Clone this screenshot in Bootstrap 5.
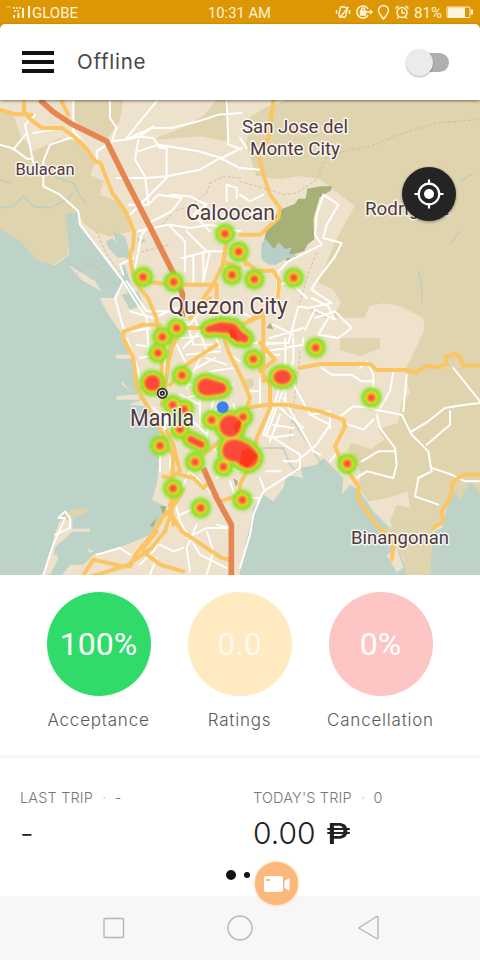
<!DOCTYPE html>
<html lang="en">
<head>
<meta charset="utf-8">
<meta name="viewport" content="width=device-width, initial-scale=1">
<title>Driver home</title>
<link href="https://cdn.jsdelivr.net/npm/bootstrap@5.3.0/dist/css/bootstrap.min.css" rel="stylesheet">
<style>
body{font-family:Inter,"Liberation Sans",sans-serif;background:#fff;color:#3c3c3c}
.screen{width:480px;height:960px;overflow:hidden}
.statusbar{height:24px;background:#de9704}
.statusbar svg{display:block}
.appbar{height:76px;padding:0 31px 0 22px;box-shadow:0 1px 3px rgba(0,0,0,.5);z-index:2;border-radius:5px 5px 0 0}
.cap{background:#de9704;z-index:2}
.brand{font-size:20.5px;letter-spacing:.75px;margin-left:23px;color:#484848;line-height:28px}
.burger i{display:block;width:32px;height:4px;background:#111;margin-bottom:5px}
.burger i:last-child{margin:0}
.toggle-track{width:36px;height:19px;border-radius:10px;background:#afafaf}
.toggle-thumb{width:27px;height:27px;border-radius:50%;background:#ebebeb;box-shadow:0 1px 2px rgba(0,0,0,.3);left:-7px;top:-4px}
.map-pane{height:475px}
.map-pane svg{display:block}
.maplabel{font-family:Roboto,sans-serif;fill:#523840;stroke:#fff;stroke-width:3px;stroke-opacity:.8;paint-order:stroke;stroke-linejoin:round}
.locate{width:54px;height:54px;left:402px;top:67px;background:#242424;box-shadow:0 1px 3px rgba(0,0,0,.4)}
.stats{height:180px;padding:17px 28px 0}
.stat{width:141px}
.disc{width:104px;height:104px;font:32px/1 Roboto,sans-serif;color:#fff}
.disc-g{background:#30db69}.disc-y{background:#ffeac1;color:#fff9ec}.disc-r{background:#fdc6c5}
.caption{font-size:17px;letter-spacing:.78px;line-height:24px;margin-top:12px;color:#5a5a5a;font-weight:300;white-space:nowrap}
.rule{height:3px;background:#f6f6fc}
.trips{height:138px;padding:31px 0 0 20px}
.trip{width:233px;white-space:nowrap;flex:none}
.head{font-size:14.5px;line-height:18px;color:#777;font-weight:300;letter-spacing:.15px}
.head b{color:#d8d8d8;font-weight:400;margin:0 4px 0 5px}
.amount{font-size:30px;line-height:36px;margin-top:8px;color:#222;font-weight:300}
.peso{font-weight:500;font-size:29px;display:inline-block;transform:scaleX(1.25);transform-origin:left;margin-left:2px}
.pager{left:226px;top:870px}
.pager i{display:block;border-radius:50%;background:#111}
.rec{left:255px;top:862px;width:43px;height:43px;background:#fcb87a;box-shadow:0 0 3px #fcb87a}
.sysnav{height:64px;background:#f7f7f7}
</style>
<script src="https://cdn.jsdelivr.net/npm/bootstrap@5.3.0/dist/js/bootstrap.bundle.min.js"></script>
</head>
<body>
<main class="screen position-relative d-flex flex-column">
<div class="statusbar d-flex align-items-center flex-shrink-0">
<svg width="480" height="24" viewBox="0 0 480 24" fill="none" stroke="#fff3d8">
<g stroke-width="2"><path d="M14 18v-3M18.500 18v-5M23 18V8M29 18V6"/><path d="M13 8h9M14 11h6" stroke-width="1.500" stroke-dasharray="2 1"/><path d="M6 7h5" stroke-opacity=".5" stroke-width="1"/></g>
<g font-family="Roboto,sans-serif" font-size="14" fill="#fff3d8" stroke="none"><text x="32" y="18" textLength="46" lengthAdjust="spacingAndGlyphs">GLOBE</text><text x="208" y="18" textLength="63" lengthAdjust="spacingAndGlyphs">10:31 AM</text><text x="414" y="17.500" textLength="28" lengthAdjust="spacingAndGlyphs">81%</text></g>
<g stroke-width="1.500"><rect x="339.500" y="7" width="7" height="10" rx="1.500" transform="rotate(12 343 12)"/><path d="M348.500 7l-9 11M336.500 10v4M349.500 10v4"/><path d="M368 9a6 6 0 1 0 0 6M366 12h6M370 10l2 2-2 2"/><rect x="360.500" y="11" width="5" height="4" fill="#fff3d8"/><path d="M361.500 11V9.500a1.500 1.500 0 0 1 3 0V11"/><path d="M383.500 19c-3-4-5-6-5-8.500a5 5 0 0 1 10 0c0 2.500-2 4.500-5 8.500z"/><circle cx="402" cy="12.500" r="5"/><path d="M402 9.500v3.500h3M395.500 8.500l3-2.500M408.500 8.500l-3-2.500M398.500 17l-1.500 1.500M405.500 17l1.500 1.500"/></g>
<rect x="447" y="7" width="23" height="10.500" rx="1" stroke-width="1"/><path d="M448 7.500h17v9.500h-17z" fill="#fff3d8" stroke="none"/><path d="M472 9.500v5" stroke-width="2"/>
</svg>
</div>
<div class="cap position-relative flex-shrink-0">
<header class="appbar bg-white d-flex align-items-center position-relative">
<div class="burger"><i></i><i></i><i></i></div>
<span class="brand">Offline</span>
<div class="toggle-track position-relative ms-auto" role="switch" aria-checked="false"><span class="toggle-thumb position-absolute"></span></div>
</header>
</div>
<section class="map-pane position-relative flex-shrink-0">
<svg width="480" height="475" viewBox="0 6 1440 1425" stroke-linejoin="round" stroke-linecap="round">
<defs>
<filter id="b4" x="-10%" y="-10%" width="120%" height="120%"><feGaussianBlur stdDeviation="4"/></filter>
<filter id="b2" x="-10%" y="-10%" width="120%" height="120%"><feGaussianBlur stdDeviation="2.500"/></filter>
<path id="dots" d="M675 407h0M716 461h0M696 531h0M763 544h0M881 539h0M429 537h0M521 552h0M530 690h0M487 717h0M474 765h0M947 749h0M760 783h0M546 832h0M518 921h0M552 934h0M635 966h0M729 957h0M480 1043h0M585 1092h0M670 1106h0M519 1171h0M602 1230h0M727 1206h0M1114 899h0M1042 1097h0M540 994h0"/>
<g id="blobs"><path d="M626 694l36-10 36 4 18 26 18 10" fill="none" stroke-width="inherit"/><path d="M630 692l34-10 36 4 18 22 18 12-22 2-24-26z"/><circle cx="457" cy="855" r="14"/><path d="M602 868q0-18 20-17l45 14q8 10-6 13l-36 5q-22 0-23-15z"/><ellipse cx="847" cy="837" rx="17" ry="12"/><circle cx="691" cy="984" r="23"/><path d="M677 1060q0-28 30-26 35 8 55 35 10 22-16 32-18 0-32-20-36 0-37-21z"/><path d="M572 1024l32 16"/></g>
</defs>
<rect y="0" width="1440" height="1440" fill="#eee2cd"/>
<g fill="#dfd4ad">
<path d="M0 30L40 50 60 110 100 160 180 120 230 130 290 180 270 230 310 250 300 290 350 310 385 350 395 400 330 415 290 405 250 375 235 345 200 350 205 470 160 500 110 485 60 430 0 395z"/>
<path d="M225 6h145l-10 60-40 60-70-36-30-30z M470 120l90-36 50-30 40-48h36l-6 124-80-15-130 10z"/>
<path d="M860 6h580v1200l-30-30-30 54-40-10-20 60-40 30-100-10-10-30 20-50 40 10-6-50-60 20-60 10-30-46 10-40-40-70 10-20 60 20 40-30-20-30 60-20 10-60 25-30-15-70 20-34 40-86-5-35-70-35-50-8-40 8-15 35-100 0 30-45-25-40-45-20 55-130 55-100-105-80-60-10-60 10-70-10-30-96 10-80 50-30z"/>
<path d="M1020 720h120v30l-60 25-60-20zM735 845l25-4 2 22-28 18z"/>
</g>
<g fill="#bdd3c7">
<path d="M0 393L60 428 110 485 165 502 208 470 196 345 235 345 240 380 375 550 345 600 300 600 360 700 370 720 405 780 410 880 445 935 480 985 478 1090 470 1160 456 1205 495 1225 500 1250 450 1310 380 1340 280 1370 250 1400 240 1440H0z"/>
<path d="M318 430l20-10 36 56-20 4-28-30zM340 400l35 15 15 50-10 20-30-40zM365 590l50-10 15 40-40 15zM410 420l30 5-20 14zM355 500l20 2 25 80-15 10z"/>
<path d="M720 1440l0-30 30-130 10-50 30-40 30 20 30-40 10-40 50 10-10-30 50-10 20-20 40 40 20 20-5 50 25-30 30 20 40 60 50 50 5 30 35 70 20 50z M1290 1440l-5-80 20-62 20-8 15-60 20-50 20 25 30-56 30 40v251z"/>
</g>
<path d="M1135 1300l100-30 65 20-10 150h-70l-10-60z" fill="#dfd4ad"/>
<g fill="#eee2cd"><path d="M345 770h50v12h-45zM348 895l70-6v16h-68zM365 848l30 35-30-24zM385 920l40-15 12 20zM205 500l80 50 20 30-60-34zM300 605l60 60 5 40-30-40zM215 1292h55v9h-55zM178 1270l40-8-2 40-50 45-20 90h-20l18-60zM150 1380l20-12 4 14-24 50zM262 1350l20 10-14 6zM290 1375l100-25 30 10-20 30-90 10zM210 1400l40 0-10 40h-60z"/>
<path d="M1190 1350l20 60-20 12-30-50zM1095 970l-20 50 40-20zM1110 840l40 50 25-10-20-80z"/></g>
<path d="M178 1270l35-35 48-5 5 12-55 20z" fill="#dfd4ad"/>
<path d="M790 440l10-50 40-55 45-18 10-15 22 0 5-30 40-7h34l-3 12-35 22-18 65 3 60-20 15-10 20-30 10-20 20-20-15z" fill="#a7b077"/>
<path d="M785 435l12-12 25 30 14-20 20 20 20-5-8 18 30 10-35 4-35 20-20 0q-22-10-25-25z" fill="#b7d0c6"/>
<path d="M480 1225l20 0-10 25zM470 1260l-22 24 12 2zM800 690l10-16 10 20zM700 1140l14 10-6 18z" fill="#a7b077"/>
<g fill="none" stroke="#b9cec3" stroke-width="4"><path d="M0 330l40-5 30-30 30 30 50 5 50-25 20-20M160 235l60 20 20 40 20 20M0 245l30 10M790 1050l60 0 20 50 20 20M860 940l120 180M1255 520l10 40v50M1350 440l30-40M1380 250l35-20M660 60l20-20"/></g>
<g fill="none" stroke="#c9b6a0" stroke-width="2.500" stroke-dasharray="7 8"><path d="M230 530l35-35 30 15 40 40 30 20M290 400l30 70 60 80M410 465l60-15 40-10M480 390l40-50 50-15 50-40 10-30 40-20 50 5M720 250l70 20 60 20 40-5 60-40 30-70 70-20 60-10 100-40 100-30 120-10 30-15M950 465l-25 60-20 70-20 60M900 760l-30 260M920 630l60 30"/></g>
<g fill="none" stroke="#fff" stroke-width="6">
<path d="M0 140l40 12 40 30 20 0M40 155l40-50M100 195l-10-50-15-65 30-30M130 190l20-50 60-20h30l-20-20V10M130 190v75l50 25 55 50 5 40 130 170 30 50 40 60 5 100M100 105l60-10"/>
<path d="M330 10v50l20 30-15 40-45 30 0 30M335 130l40-5 80-35 60 0 80-20 60-20 70-5M380 120l40-50 50-60M380 125l40-10 40-30M400 115l60 5 20 30 20 0 0 90M350 240l90 0 60-5 100-20 60-35 60 30M415 125l-10 60 30 50 10 80M415 160l60-20 120 20 70 20 60-30M680 10l5 130 30 10M385 320l60 0 30-30 70 10-30 40-60 30-30 40-20 100M390 350l50-50 30-30 30-30M415 400l90-20 50 50 0 90M510 380l60 10 60-10 90 20M560 400l60 60h100M580 470v90M610 470v80M630 460l-20 90M510 290l60 5 50 25-40 30 50 50M680 310v-50l30 10v30M400 480l-40 20 10 30M545 480l80-20"/>
<path d="M370 550l-25 50 25 90 30 10 50-10M380 550l60 90 90 0M390 640l70 20 70-30"/>
</g>
<g fill="none" stroke="#fff" stroke-width="6" transform="translate(720 0)"><path d="M0 120l20 30M0 210l60 5M0 290l30 20 40-20M250 290l45 30-35 60-10 40 55 15-20 40-60 80-10 20 60 40-70 15-30-5-30 110-30 0-90 0M250 290l-20 60-5 60 20 30-40 20-60 30-30 30-10 120M215 600l50 25 20 40-60-30-30 60M225 660l60-20 50 50-40 30-60-10 30-50M120 560l30-10 50 50M0 640l40 20M100 680l60 30M90 720l100-30M60 740l70-5M60 770l60 0"/></g>
<g fill="none" stroke="#fff" stroke-width="6" transform="translate(720 720)">
<path d="M245 90l30 20 60 0 30 20 30 0M360 90l20-20 20 40 0 100M420 210l30-50 10-60M405 215l80 15 30 60 50 50 10 60-40 20-10 55 70 25M490 220l10-110M515 280l50-30 50-40 60-10 45-5M560 320l70-60 0-40M640 90l80 100M575 390l60 20 40 20h45M400 210l-60-5-40 30M310 255l30 10 30 10 30-30M410 230l10 40 45 60 5 50-10 40-80-20-30 20M365 370l50-30h50M270 370l25-30M0 690l30-100 10-60 30-70 110-70 0-40-80-50-30-10 30-80 20-70 40-50M80 290l80-220 0-70M90 300l70-10M80 40l110-20 0-20M110 200l80 70M130 180l90 160 20 10M150 120l60 110 60 30-40 60-60 50h-40M210 230l60-10 0 50M100 260l60 10M80 400h40M60 420l15 40M30 480h30M136 0v200M60 120v90M20 160h40M100 210l-30 80M120 230l-30 80"/>
</g>
<g fill="none" stroke="#fff" stroke-width="5.500" transform="translate(0 720)">
<path d="M130 710l30-90 35-80-20 0 20-20 15 20 0 30-45 20M380 0l30 80 20 80M410 20l60 10M420 60l50-10M430 110l60 0M500 0l-10 110M530 20l40 80M555 110l90-50M540 170l60 30M490 200l20 60 0 130M500 200l-10 130M520 250l80 70M550 220l70 70M460 210l60 60M600 190l0 70M640 180l-20 120M560 180l60-20M510 430l30 120 60 100 80 40M540 530l70-30M520 540l-60 100-40 40M560 600l60-30 60 0M590 560l-30 70 10 70M620 580l20 60-20 70M480 620l40 20 30-10M470 660l-20 50M650 560l40 10M290 650l70-20 30 20M540 460l30-60 80 80M650 420l40-30 30 10M690 430l20 60M690 50l30 20M620 60l60 20M630 100l70-10M560 140l140 0M600 60l-40 90M660 200l-50 60M700 200l20 60M640 330l60 60M480 340v60"/>
<path d="M530 -60l40 20 30-40M560 -50l20 70 60 0M580 -70l40 110M540 -30l90 0M540 0l100-10M550 30l60-60M560 50l100-10M640 -20l20 50"/></g>
<g fill="none" stroke="#fbc563" stroke-width="12">
<path d="M0 35l40 12 40 3 15 0M72 10l0 30 20 25 35 25 60 0 40 30 30 30 30 40 15 5 15 40 20 50 40 55 25 60-3 50-10 20 10 60 20 40 25 30 25 60 10 70M185 10l20 40"/>
<path d="M429 550l90 10h120l30-60 10-70M640 560l-30 40M650 560v60M480 680l-50 0-60 20 0 20 30 60 10 90 30 50 50 90 30 70-5 80 0 80-20 60-40 50-70 50-60 20-70 20-40 30-10 60M530 690h90M515 720l-20 150-10 50M485 720v130M570 660l60-60M550 680l-30 60"/>
<path d="M720 410h60l55-50 5-30-30-40-20-60-15-60 30-50 15-110M680 430l-10 60 50 20M735 490l35 28h50l18 30-5 50M738 500l-10-60M690 690l60-20 40-20 0 20v180M790 640l-90 60M790 770l-10 50 45-35-45-50M790 830l20 30 0 70-40 90-10 60-40 80 0 30-60 20M650 740l-90 60-50 60M665 700l20 60 40 80 25 60-10 30 60-10h60l100 20 70 25 5 20-30 60 20 50 30 40 20 30 0 40 50 70 45 50 10 20-5 40M900 810l60-12h60l90 0 20 18 90 0 25 8 35-20 35 4 25-10-5-20 30-10 15 10 10 25 50-2 60 10 20 14M1300 1290l30-20-5-30 25-40 10-50 30-20h50"/>
<path d="M250 1431l30-46 90 20 20 0 20-40 50-60 30-50 30-30 30-50M520 1280l-10-60 20-20M515 1250l30 50 60 40 60 40 25 5M430 1360l50 40 70 20M430 1350l40-50M500 1000l20 40 20 80-30 20-20-5M540 1130l40 10 30 30 20-20M610 1070l60-50M530 930l10 60M525 720l-20 70"/>
</g>
<path d="M120 6l40 36 55 36 105 52 60 120 80 156 60 120 27 60v70M610 1110l40 90 44 80v160" fill="none" stroke="#e58550" stroke-width="17" stroke-linecap="butt"/>
<g fill="none">
<g stroke="#8fe03a" stroke-opacity=".4" fill="#8fe03a" filter="url(#b4)"><use href="#dots" stroke-width="72"/><use href="#blobs" stroke-width="62"/></g>
<g stroke="#87e022" fill="#87e022" filter="url(#b2)"><use href="#dots" stroke-width="58"/><use href="#blobs" stroke-width="49"/></g>
<g stroke="#e3df35" fill="#e3df35" filter="url(#b2)"><use href="#dots" stroke-width="40"/><use href="#blobs" stroke-width="32"/></g>
<g stroke="#f89e2d" fill="#f89e2d" filter="url(#b2)"><use href="#dots" stroke-width="28"/><use href="#blobs" stroke-width="22"/></g>
<g stroke="#fb493b" fill="#fb493b" filter="url(#b2)"><use href="#dots" stroke-width="18"/><use href="#blobs" stroke-width="16"/></g>
</g>
<path d="M725 1060l22-10 26 24-32 34-22-12zM686 694l20 4 6 28-20-8zM700 986l14-20 10 8-14 30z" fill="#fb3819"/>
<circle cx="668" cy="928" r="18" fill="#3b82ef"/>
<circle cx="487" cy="886" r="14" fill="#ddd" stroke="#292929" stroke-width="5"/><circle cx="487" cy="886" r="5" stroke="#222" stroke-width="5" fill="#fff"/>
<g transform="translate(0 -294) scale(3)" class="maplabel">
<text x="15.500" y="174.500" font-size="17" textLength="59" lengthAdjust="spacingAndGlyphs">Bulacan</text>
<text x="242" y="133" font-size="18" textLength="106" lengthAdjust="spacingAndGlyphs">San Jose del</text>
<text x="250" y="155" font-size="18" textLength="90" lengthAdjust="spacingAndGlyphs">Monte City</text>
<text x="186" y="220" font-size="22" textLength="89" lengthAdjust="spacingAndGlyphs">Caloocan</text>
<text x="365" y="215" font-size="18" textLength="84" lengthAdjust="spacingAndGlyphs">Rodriguez</text>
<text x="168.500" y="313.500" font-size="23.500" textLength="119" lengthAdjust="spacingAndGlyphs">Quezon City</text>
<text x="130" y="425.500" font-size="23" textLength="64" lengthAdjust="spacingAndGlyphs">Manila</text>
<text x="351" y="544" font-size="18" textLength="98" lengthAdjust="spacingAndGlyphs">Binangonan</text>
</g>
</svg>
<button class="locate btn p-0 border-0 rounded-circle position-absolute d-flex align-items-center justify-content-center" aria-label="My location">
<svg width="30" height="30" viewBox="0 0 30 30" fill="none" stroke="#fff" stroke-width="2.200"><circle cx="15" cy="15" r="10.300"/><path d="M15 .5v5M15 24.500v5M.5 15h5M24.500 15h5"/><circle cx="15" cy="15" r="5" fill="#fff" stroke="none"/></svg>
</button>
</section>
<section class="stats bg-white d-flex flex-shrink-0 text-center">
<div class="stat d-flex flex-column align-items-center"><div class="disc disc-g rounded-circle d-flex align-items-center justify-content-center">100%</div><div class="caption">Acceptance</div></div>
<div class="stat d-flex flex-column align-items-center"><div class="disc disc-y rounded-circle d-flex align-items-center justify-content-center">0.0</div><div class="caption">Ratings</div></div>
<div class="stat d-flex flex-column align-items-center"><div class="disc disc-r rounded-circle d-flex align-items-center justify-content-center">0%</div><div class="caption">Cancellation</div></div>
</section>
<div class="rule flex-shrink-0"></div>
<section class="trips bg-white d-flex flex-shrink-0">
<div class="trip"><div class="head">LAST TRIP <b>·</b> -</div><div class="amount">-</div></div>
<div class="trip"><div class="head">TODAY'S TRIP <b>·</b> 0</div><div class="amount">0.00 <span class="peso">₱</span></div></div>
</section>
<nav class="sysnav flex-shrink-0">
<svg width="480" height="64" viewBox="0 0 480 64" fill="none" stroke="#b5b5b5" stroke-width="1.400" stroke-linejoin="round"><rect x="104" y="22.500" width="19.500" height="19" rx="1"/><circle cx="240" cy="32" r="12"/><path d="M359.500 31.500l17-11q1.500-.5 1.500 1v20q0 1.500-1.500 1l-17-10q-1-.5 0-1z"/></svg>
</nav>
<div class="pager position-absolute d-flex align-items-center gap-2"><i style="width:10px;height:10px"></i><i style="width:6px;height:6px"></i></div>
<div class="rec position-absolute rounded-circle d-flex align-items-center justify-content-center"><svg width="26" height="18" viewBox="0 0 26 18" fill="#fff"><path d="M2 1h15q2 0 2 2v12q0 2-2 2H2q-2 0-2-2V3q0-2 2-2zM20.500 6l5-3v13l-5-3z"/><path d="M2 4h4v2H2z" fill="#fcb87a"/></svg></div>
</main>
</body>
</html>
